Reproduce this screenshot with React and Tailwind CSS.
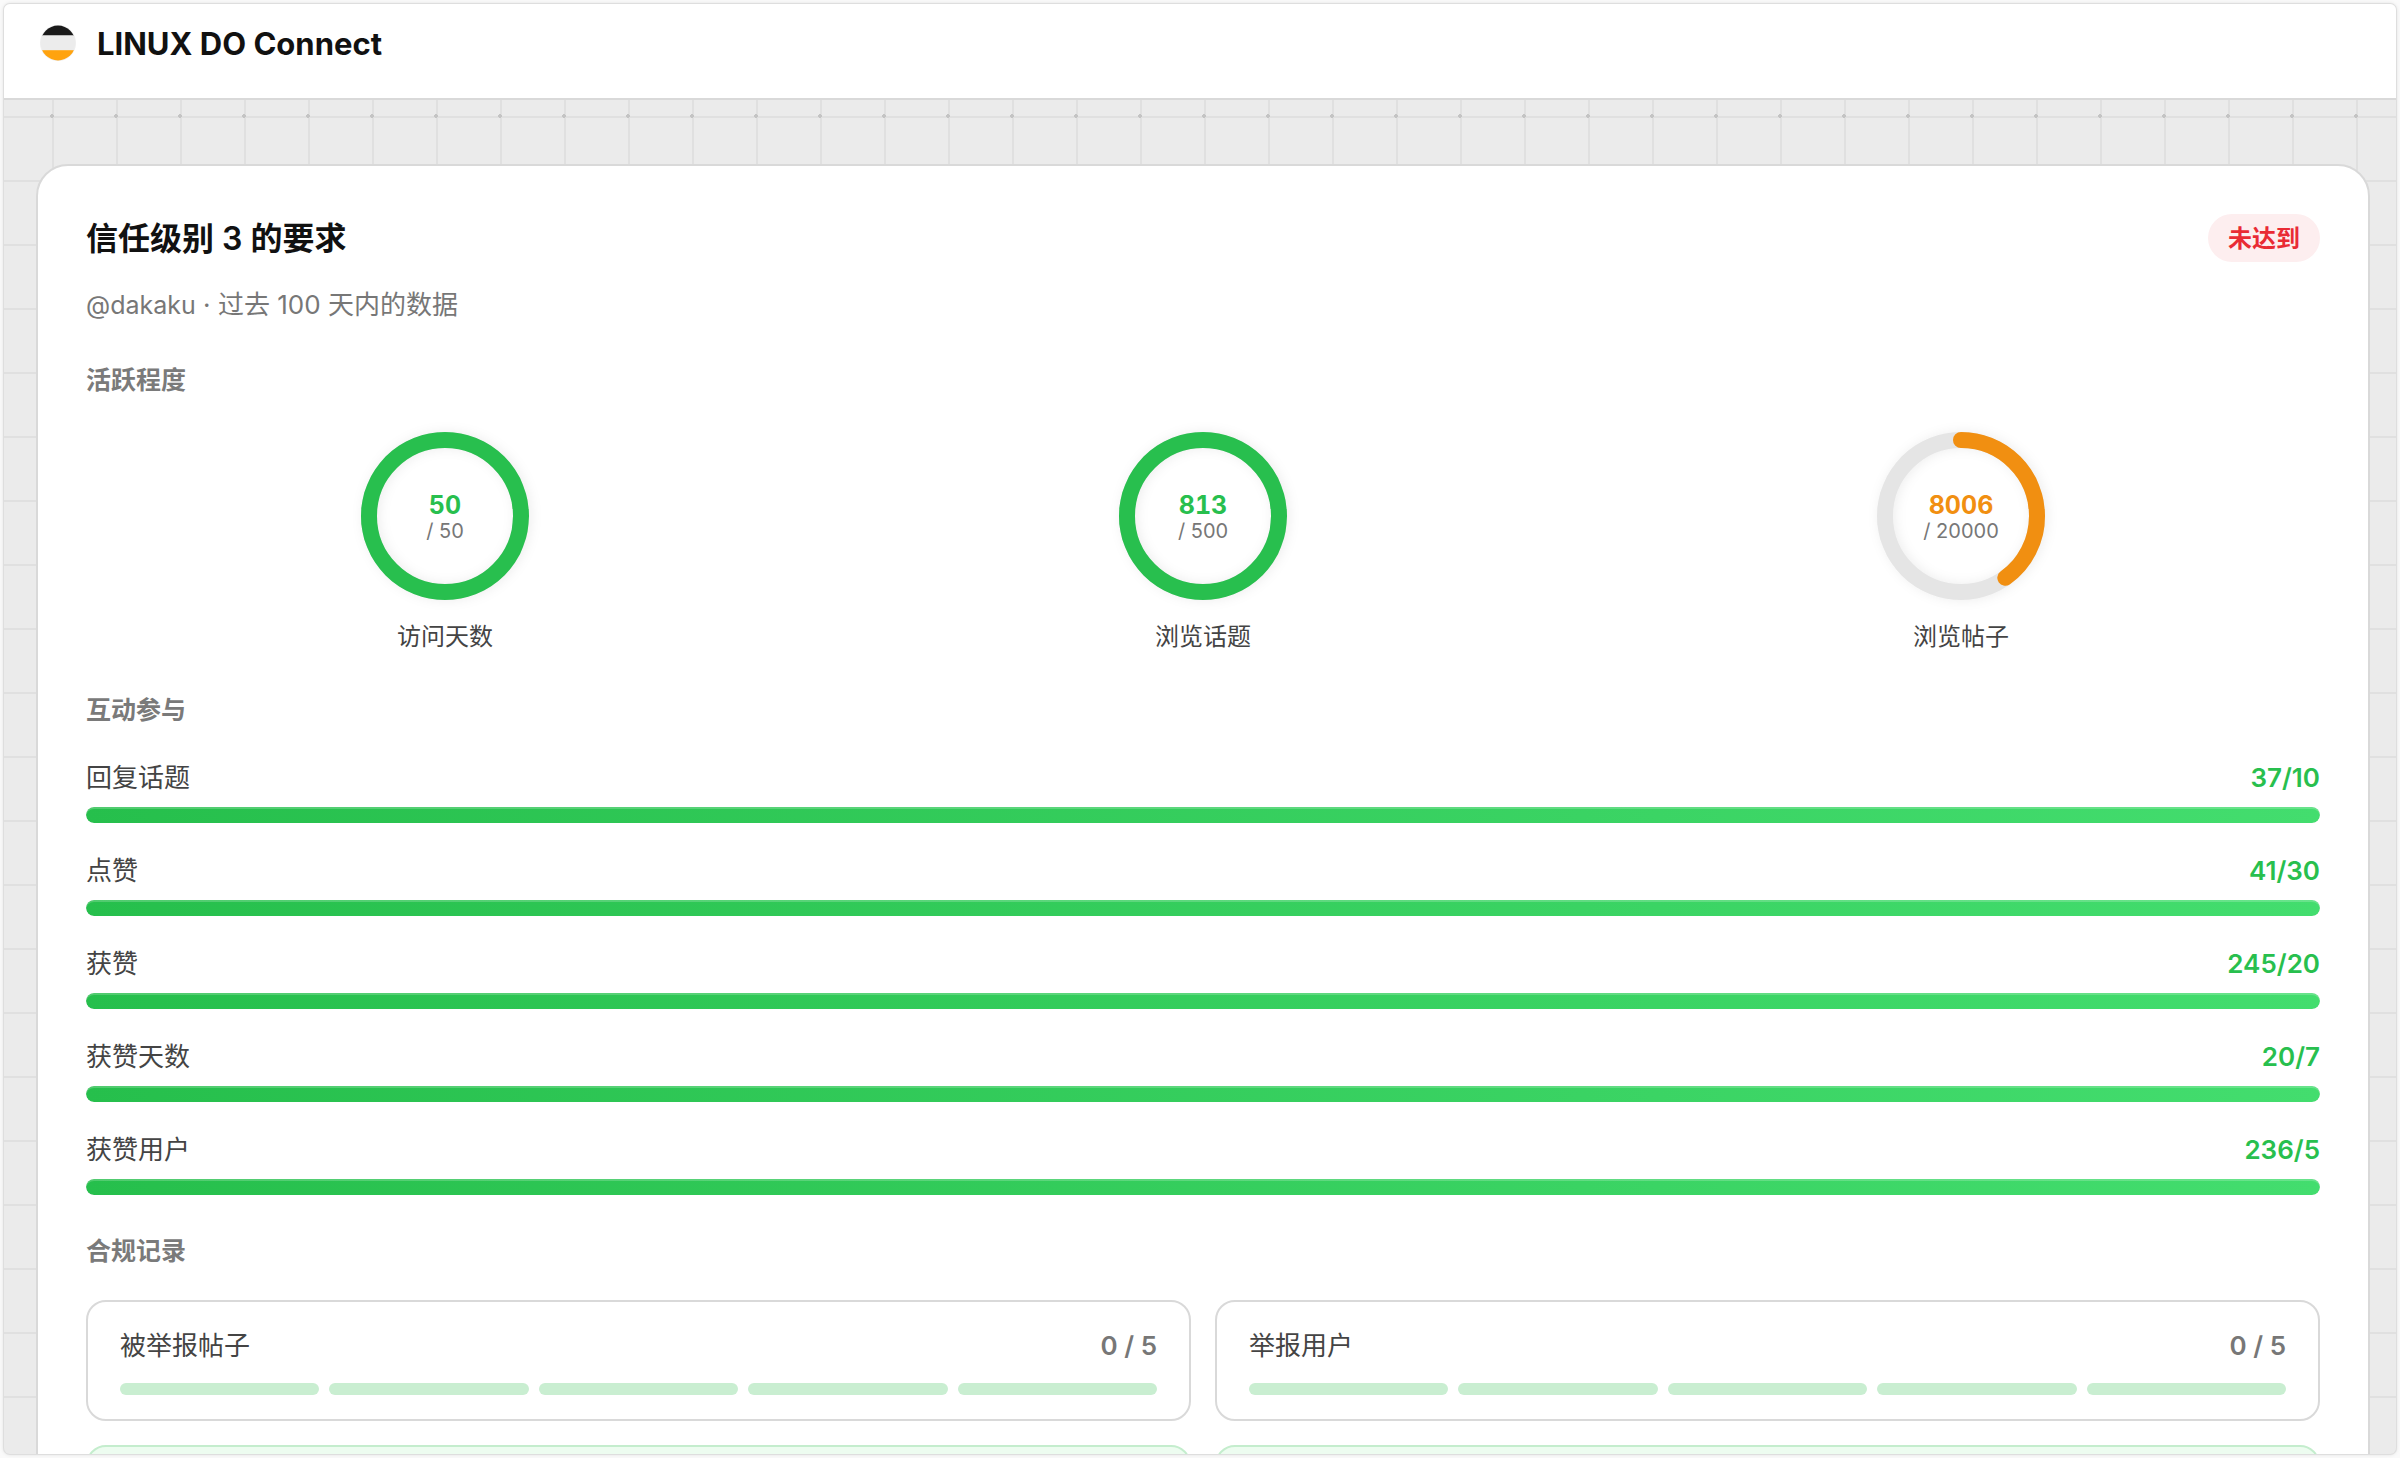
const rings = [
  { label: '访问天数', value: 50, target: 50 },
  { label: '浏览话题', value: 813, target: 500 },
  { label: '浏览帖子', value: 8006, target: 20000 },
];

const bars = [
  { label: '回复话题', value: 37, target: 10 },
  { label: '点赞', value: 41, target: 30 },
  { label: '获赞', value: 245, target: 20 },
  { label: '获赞天数', value: 20, target: 7 },
  { label: '获赞用户', value: 236, target: 5 },
];

const quotas = [
  { label: '被举报帖子', used: 0, max: 5 },
  { label: '举报用户', used: 0, max: 5 },
];

function Logo() {
  return (
    <svg viewBox="0 0 120 120" className="size-9" aria-hidden="true">
      <clipPath id="logo-clip">
        <circle cx="60" cy="60" r="58" />
      </clipPath>
      <circle cx="60" cy="60" r="60" fill="#f0f0f0" />
      <g clipPath="url(#logo-clip)">
        <rect x="0" y="0" width="120" height="35" fill="#1a1a1a" />
        <rect x="0" y="35" width="120" height="49" fill="#ececec" />
        <rect x="0" y="84" width="120" height="36" fill="#ffa30f" />
      </g>
    </svg>
  );
}

function SectionTitle({ children }) {
  return <h2 className="text-[25px] leading-9 font-semibold text-[#7a7a7a]">{children}</h2>;
}

function Ring({ label, value, target }) {
  const done = value >= target;
  const length = 2 * Math.PI * 76;
  const share = Math.min(value / target, 1);
  return (
    <div className="flex flex-col items-center gap-[19px]">
      <div className="grid size-[168px] place-items-center">
        <svg
          viewBox="0 0 168 168"
          className="col-start-1 row-start-1 size-full -rotate-90 overflow-visible [filter:drop-shadow(0_2px_6px_rgb(0_0_0/0.07))]"
          aria-hidden="true"
        >
          <circle cx="84" cy="84" r="76" fill="none" strokeWidth="16" className="stroke-[#e5e5e5]" />
          <circle
            cx="84"
            cy="84"
            r="76"
            fill="none"
            strokeWidth="16"
            strokeLinecap="round"
            strokeDasharray={`${length * share} ${length}`}
            className={done ? 'stroke-[#28bf4e]' : 'stroke-[#f18f11]'}
          />
        </svg>
        <div className="col-start-1 row-start-1 flex flex-col items-center pt-1">
          <span
            className={
              done
                ? 'text-[25px] leading-[26px] font-bold text-[#28bf4e] tabular-nums'
                : 'text-[25px] leading-[26px] font-bold text-[#f18f11] tabular-nums'
            }
          >
            {value}
          </span>
          <span className="text-xl leading-[26px] text-[#777777]">/ {target}</span>
        </div>
      </div>
      <span className="text-2xl leading-9 text-[#444444]">{label}</span>
    </div>
  );
}

function Bar({ label, value, target }) {
  return (
    <li className="flex flex-col gap-[10px]">
      <div className="flex items-center justify-between text-[26px] leading-[39px]">
        <span className="text-[#444444]">{label}</span>
        <span className="font-semibold text-[#28bf4e]">
          {value}/{target}
        </span>
      </div>
      <div className="h-4 overflow-hidden rounded-full bg-[#e5e5e5]">
        <div
          className="h-full rounded-full bg-linear-to-r from-[#26bf4c] to-[#43dd6e] shadow-[inset_0_2px_0_rgb(255_255_255/0.2)]"
          style={{ width: `${Math.min(value / target, 1) * 100}%` }}
        />
      </div>
    </li>
  );
}

function Quota({ label, used, max }) {
  return (
    <div className="flex flex-col gap-[18px] rounded-[20px] border-2 border-[#d9d9d9] px-8 py-6">
      <div className="flex items-center justify-between text-[26px] leading-[39px]">
        <span className="text-[#444444]">{label}</span>
        <span className="font-semibold text-[#777777]">
          {used} / {max}
        </span>
      </div>
      <div className="flex gap-[10px]">
        {Array.from({ length: max }, (_, i) => (
          <div key={i} className="h-3 flex-1 rounded-full bg-[#c9eed1]" />
        ))}
      </div>
    </div>
  );
}

export default function App() {
  return (
    <div className="h-screen bg-[#fafafa] p-1 font-[Inter,'Noto_Sans_CJK_SC',sans-serif]">
      <div className="flex h-full flex-col overflow-hidden rounded-md bg-[#ebebeb] shadow-[0_0_0_1px_#dedede,0_0_4px_rgb(0_0_0/0.15)]">
        <header className="flex h-24 shrink-0 items-start border-b-2 border-[#d9d9d9] bg-white px-9 pt-[21px]">
          <a href="#" className="flex items-start gap-[21px]">
            <Logo />
            <span className="text-[31px] leading-[38px] font-bold text-[#111111]">LINUX DO Connect</span>
          </a>
        </header>

        <main className="min-h-0 flex-1 bg-[radial-gradient(circle_at_center,#c4c4c4_2px,transparent_2px),linear-gradient(#e0e0e0_2px,transparent_2px),linear-gradient(90deg,#e0e0e0_2px,transparent_2px)] bg-[size:64px_64px] bg-[position:16px_-16px,48px_16px,48px_16px] pt-16 pr-[26px] pl-8">
          <section className="rounded-4xl border-2 border-[#d9d9d9] bg-white p-12">
            <div className="flex items-start justify-between">
              <h1 className="text-[32px] leading-[50px] font-semibold text-[#111111]">信任级别 3 的要求</h1>
              <span className="rounded-full bg-[#fdeeef] px-5 pt-[7px] pb-[5px] text-2xl leading-9 font-semibold text-[#e92b34]">
                未达到
              </span>
            </div>
            <p className="mt-[21px] text-[26px] leading-[39px] text-[#777777]">
              <span className="text-[25px]">@dakaku</span> · 过去 100 天内的数据
            </p>

            <div className="mt-[37px]">
              <SectionTitle>活跃程度</SectionTitle>
              <div className="mt-[34px] grid grid-cols-3 gap-10">
                {rings.map((r) => (
                  <Ring key={r.label} {...r} />
                ))}
              </div>
            </div>

            <div className="mt-[37px]">
              <SectionTitle>互动参与</SectionTitle>
              <ul className="mt-[30px] flex flex-col gap-7">
                {bars.map((b) => (
                  <Bar key={b.label} {...b} />
                ))}
              </ul>
            </div>

            <div className="mt-[38px]">
              <SectionTitle>合规记录</SectionTitle>
              <div className="mt-[31px] grid grid-cols-2 gap-6">
                {quotas.map((q) => (
                  <Quota key={q.label} {...q} />
                ))}
                <div className="h-32 rounded-[20px] border-2 border-[#c4edcd] bg-[#edfcf0]" />
                <div className="h-32 rounded-[20px] border-2 border-[#c4edcd] bg-[#edfcf0]" />
              </div>
            </div>
          </section>
        </main>
      </div>
    </div>
  );
}
